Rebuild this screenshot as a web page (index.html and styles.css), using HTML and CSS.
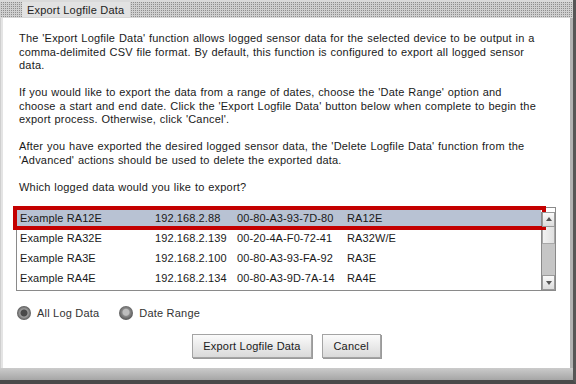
FILE: index.html
```html
<!DOCTYPE html>
<html lang="en">
<head>
  <meta charset="UTF-8" />
  <title>Export Logfile Data</title>
  <link rel="stylesheet" href="styles.css">
</head>
<body>
  <div class="window">
    <div class="titlebar">
      <span class="tab">Export Logfile Data</span>
    </div>

    <div class="frame">
      <main class="panel">
        <p>The 'Export Logfile Data' function allows logged sensor data for the selected device to be output in a<br>
          comma-delimited CSV file format. By default, this function is configured to export all logged sensor<br>
          data.</p>
        <p>If you would like to export the data from a range of dates, choose the 'Date Range' option and<br>
          choose a start and end date. Click the 'Export Logfile Data' button below when complete to begin the<br>
          export process. Otherwise, click 'Cancel'.</p>
        <p>After you have exported the desired logged sensor data, the 'Delete Logfile Data' function from the<br>
          'Advanced' actions should be used to delete the exported data.</p>
        <p>Which logged data would you like to export?</p>

        <!-- Device list -->
        <div class="list">
          <div class="rows">
            <div class="row selected">
              <span>Example RA12E</span><span>192.168.2.88</span><span>00-80-A3-93-7D-80</span><span>RA12E</span>
            </div>
            <div class="row">
              <span>Example RA32E</span><span>192.168.2.139</span><span>00-20-4A-F0-72-41</span><span>RA32W/E</span>
            </div>
            <div class="row">
              <span>Example RA3E</span><span>192.168.2.100</span><span>00-80-A3-93-FA-92</span><span>RA3E</span>
            </div>
            <div class="row">
              <span>Example RA4E</span><span>192.168.2.134</span><span>00-80-A3-9D-7A-14</span><span>RA4E</span>
            </div>
          </div>
          <div class="scrollbar">
            <div class="arrow up"></div>
            <div class="thumb"></div>
            <div class="track"></div>
            <div class="arrow down"></div>
          </div>
        </div>

        <!-- Export options -->
        <div class="options">
          <label class="option"><span class="radio checked"></span>All Log Data</label>
          <label class="option"><span class="radio"></span>Date Range</label>
        </div>

        <div class="actions">
          <button class="btn">Export Logfile Data</button>
          <button class="btn">Cancel</button>
        </div>
      </main>
    </div>

    <div class="bottom"></div>
  </div>
</body>
</html>
```

FILE: styles.css
```css
* {
  box-sizing: border-box;
}

body {
  margin: 0;
  font-family: "Liberation Sans", Arial, sans-serif;
  font-size: 11px;
  letter-spacing: 0.2px;
  color: #1a1a1a;
  background: #ffffff;
}

.window {
  width: 576px;
  height: 384px;
  display: flex;
  flex-direction: column;
  border-right: 3px solid #565656;
  border-bottom: 4px solid #4a4a4a;
  background: #e4e4e4;
}

.titlebar {
  height: 19px;
  padding-left: 22px;
  display: flex;
  background: conic-gradient(#8e8e8e 0 25%, #cfcfcf 0) 0 0 / 2px 2px;
  border-top: 2px solid #dadada;
  border-bottom: 1px solid #d8d8d8;
}

.tab {
  display: flex;
  align-items: center;
  padding: 0 6px 0 5px;
  background: #e2e2e2;
  color: #222;
  white-space: nowrap;
}

.frame {
  flex: 1;
  display: flex;
  padding-left: 2px;
  border-left: 1px solid #cfcfcf;
}

.panel {
  flex: 1;
  display: flex;
  flex-direction: column;
  background: #ffffff;
  border-right: 3px solid #b2b2b2;
  padding: 14px 16px 10px 16px;
}

.panel p {
  margin: 0 0 13.5px;
  line-height: 13.5px;
  word-spacing: 0.5px;
  white-space: nowrap;
}

.panel p:last-of-type {
  margin-bottom: 13px;
}

.list {
  height: 84px;
  margin: 0 -2px 0 -3px;
  display: flex;
  border: 1px solid #8a8a8a;
  background: #ffffff;
}

.rows {
  flex: 1;
}

.row {
  height: 20px;
  display: grid;
  grid-template-columns: 135px 82px 110px 1fr;
  align-items: center;
  padding-left: 3px;
  letter-spacing: 0.1px;
}

.row.selected {
  position: relative;
  background: #b8c2d3;
}

.row.selected::after {
  content: "";
  position: absolute;
  top: -2px;
  bottom: -2px;
  left: -4px;
  right: -5px;
  border: 4px solid #c40000;
}

.scrollbar {
  width: 14px;
  display: flex;
  flex-direction: column;
  margin-top: 4px;
  border-left: 1px solid #8a8a8a;
  background: #c6c6c6;
}

.arrow {
  height: 15px;
  position: relative;
  background: linear-gradient(#fafafa, #dcdcdc);
  border: 1px solid #9a9a9a;
}

.arrow::after {
  content: "";
  position: absolute;
  left: 3px;
  top: 4px;
  border-left: 3px solid transparent;
  border-right: 3px solid transparent;
}

.arrow.up::after {
  border-bottom: 4px solid #555;
}

.arrow.down::after {
  top: 5px;
  border-top: 4px solid #555;
}

.thumb {
  height: 17px;
  background: linear-gradient(90deg, #f2f2f2, #e0e0e0);
  border: 1px solid #a8a8a8;
  border-top: none;
}

.track {
  flex: 1;
}

.options {
  margin-top: 15px;
  height: 14px;
  display: flex;
  gap: 20px;
  margin-left: -2px;
}

.option {
  display: flex;
  align-items: center;
  gap: 6px;
  color: #333;
}

.radio {
  width: 14px;
  height: 14px;
  border-radius: 50%;
  background: radial-gradient(circle at 50% 45%, #bdbdbd 0 3px, #8a8a8a 4px, #5e5e5e 7px);
}

.radio.checked {
  background: radial-gradient(circle at 50% 50%, #4a4a4a 0 3px, #a0a0a0 4px, #5a5a5a 7px);
}

.actions {
  margin-top: 14px;
  display: flex;
  justify-content: center;
  gap: 10px;
}

.btn {
  height: 24px;
  padding: 0 10px;
  font-family: "Liberation Sans", Arial, sans-serif;
  font-size: 11px;
  letter-spacing: 0.2px;
  color: #1a1a1a;
  background: linear-gradient(#fbfbfb, #dadada);
  border: 1px solid #a4a4a4;
  box-shadow: 1px 1px 0 #9a9a9a;
  cursor: pointer;
}

.btn:last-child {
  width: 59px;
}

.bottom {
  height: 12px;
  background: linear-gradient(#cbcbcb, #a6a6a6);
}
```
